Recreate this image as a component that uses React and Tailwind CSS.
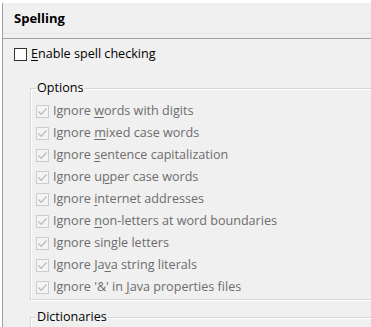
import React from 'react';

const options = [
  ['Ignore ', 'w', 'ords with digits'],
  ['Ignore ', 'm', 'ixed case words'],
  ['Ignore ', 's', 'entence capitalization'],
  ['Ignore u', 'p', 'per case words'],
  ['Ignore ', 'i', 'nternet addresses'],
  ['Ignore ', 'n', 'on-letters at word boundaries'],
  ['I', 'g', 'nore single letters'],
  ['Ignore Ja', 'v', 'a string literals'],
  ["Ignore '&' in ", 'J', 'ava properties files'],
];

function Check({ checked, disabled }) {
  return (
    <span
      className={`w-[13px] h-[13px] shrink-0 border flex items-center justify-center ${
        disabled ? 'border-[#cccccc] bg-[#f4f4f4]' : 'border-[#333333] bg-white'
      }`}
    >
      {checked && (
        <svg width="11" height="11" viewBox="0 0 11 11">
          <path d="M1.5 5.5 L4.2 8.2 L9.5 2.5" fill="none" stroke="#bdbdbd" strokeWidth="1.3" />
        </svg>
      )}
    </span>
  );
}

function Group({ title, children, className }) {
  return (
    <fieldset
      className={`ml-[27px] w-[400px] border border-[#d5d5d5] shadow-[inset_1px_1px_0_#fff,1px_1px_0_#fff] pl-[5px] ${className}`}
    >
      <legend className="px-[1px] h-[16px] leading-[16px] text-[12.6px] text-black">{title}</legend>
      {children}
    </fieldset>
  );
}

export default function App() {
  return (
    <div
      className="w-[371px] h-[327px] overflow-hidden bg-white pt-[3px] pl-[2px]"
      style={{ fontFamily: '"Open Sans", "Noto Sans", sans-serif' }}
    >
      <div className="h-[330px] bg-[#f0f0f0] border-l border-[#a0a0a0]">
        <div className="h-[31px] border-b border-[#e4e4e4] pl-[11px] pt-[6px] text-[13px] font-bold text-black">
          Spelling
        </div>
        <div className="mt-[4px] border-t border-[#a0a0a0]" />
        <label className="mt-[5px] h-[20px] flex items-center gap-[4px] pl-[11px] text-[12.6px] text-black">
          <Check />
          <span>
            <span className="underline underline-offset-2">E</span>nable spell checking
          </span>
        </label>
        <Group title="Options" className="mt-[16px] pb-[1px]">
          <div className="mt-[4px] flex flex-col">
            {options.map(([a, u, b], i) => (
              <div key={i} className="h-[22px] flex items-center gap-[4px] text-[12.6px] text-[#6d6d6d]">
                <Check checked disabled />
                <span>
                  {a}
                  <span className="underline underline-offset-2">{u}</span>
                  {b}
                </span>
              </div>
            ))}
          </div>
        </Group>
        <Group title="Dictionaries" className="mt-[9px] h-[60px]" />
      </div>
    </div>
  );
}
